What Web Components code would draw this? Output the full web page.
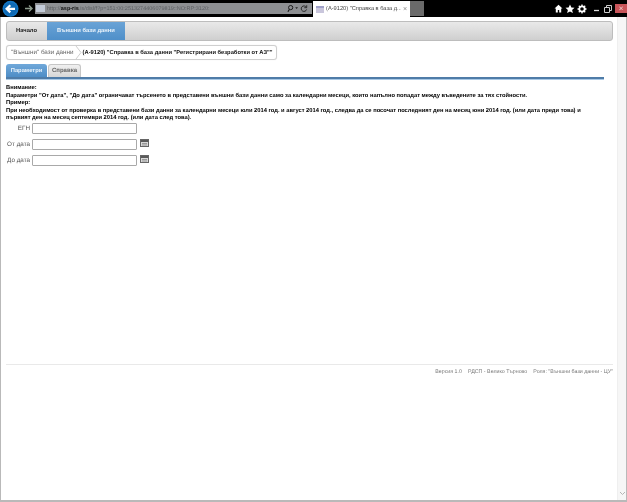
<!DOCTYPE html>
<html><head><meta charset="utf-8">
<style>
html,body{margin:0;height:502px;overflow:hidden;background:#fff;font-family:"Liberation Sans",Arial,sans-serif;text-rendering:geometricPrecision}
ie-window{height:502px;filter:blur(.3px)}
</style></head><body>
<ie-window>
  <ie-chrome></ie-chrome>
  <app-menu></app-menu>
  <crumb-bar></crumb-bar>
  <tab-strip></tab-strip>
  <notice-text></notice-text>
  <date-form></date-form>
  <app-footer></app-footer>
</ie-window>
<script>
function def(name,html){
  customElements.define(name,class extends HTMLElement{
    constructor(){super();this.attachShadow({mode:'open'}).innerHTML=html;}
  });
}
def('ie-window',`<style>
:host{display:flex;flex-direction:column;box-sizing:border-box;background:#b9b9b9;padding:0 1px 2px 1px}
.top{flex:none}
.body{flex:1;display:flex;min-height:0;background:#fff;}
.page{flex:1;display:flex;flex-direction:column;padding:4px 4px 0 5px;min-width:0;}
.sb{flex:none;width:9px;background:#f6f6f6;border-left:1px solid #efefef;box-sizing:border-box;display:flex;flex-direction:column;justify-content:flex-end;align-items:center;padding-bottom:4px}
</style>
<div class="top"><slot name="chrome"></slot></div>
<div class="body"><div class="page"><slot></slot></div>
<div class="sb"><svg width="7" height="5" viewBox="0 0 7 5"><path d="M1 1l2.500 2.500L6 1" fill="none" stroke="#b5b5b5" stroke-width="1"/></svg></div></div>`);
def('ie-chrome',`<style>
:host{display:flex;align-items:center;height:17px;background:#000;margin:0 -1px;position:relative;font-size:5.500px}
svg{display:block;flex:none}
.addr{width:277px;height:11px;margin-left:1px;background:#8d8f92;display:flex;align-items:center;color:#5c5f63;box-sizing:border-box;padding:0 3px 0 1px;gap:1px;white-space:nowrap;overflow:hidden}
.addr b{color:#111}
.addr .u{flex:1;overflow:hidden}
.pg{width:9px;height:7px;background:#c3cbd8;flex:none;margin-right:1px}
.tab{width:97px;height:16px;margin-left:1px;align-self:flex-end;background:#fff;display:flex;align-items:center;gap:2px;padding:0 3px 0 3px;box-sizing:border-box;color:#444;white-space:nowrap;font-size:5.700px}
.tab .t{flex:1;overflow:hidden}
.tab i{font-style:normal;color:#888;font-size:7px}
.fav{width:8px;height:7px;background:#c9c6dc;border-top:2px solid #9fa0c8;box-sizing:border-box;flex:none}
.new{width:14px;height:15px;background:#6a6a6a;align-self:flex-end;margin-bottom:1px}
.right{margin-left:auto;display:flex;align-items:center;height:17px}
.x{width:12px;height:9px;background:#c9555a;margin-left:3px;color:#f3d7d7;font-size:8px;line-height:9px;text-align:center}
</style>
<svg width="19" height="17" viewBox="0 0 19 17" style="margin-left:1px"><circle cx="9.500" cy="8.800" r="8" fill="#1577c5"/><circle cx="9.500" cy="8.800" r="6.600" fill="#0f6ab5"/><path d="M14 8.800H6M9.300 5.200L5.600 8.800l3.700 3.600" fill="none" stroke="#fff" stroke-width="2.200"/></svg>
<svg width="10" height="9" viewBox="0 0 10 9" style="margin-left:4px"><path d="M1 4.500h7M5 1.500l3 3-3 3" fill="none" stroke="#8c9a8c" stroke-width="1.400"/></svg>
<div class="addr"><span class="pg"></span><span class="u">http://<b>asp-ris</b>.is/disl/f?p=151:00:2513274406079819::NO:RP:3120:</span>
<svg width="22" height="9" viewBox="0 0 24 9"><circle cx="4" cy="3.500" r="2.300" fill="none" stroke="#111" stroke-width="1"/><path d="M2.500 5.500L1 8" stroke="#111" stroke-width="1.200"/><path d="M9 3l1.500 2L12 3z" fill="#222"/><path d="M21 3a3 3 0 1 0 .4 2.500M21.500 1v2.600h-2.600" fill="none" stroke="#222" stroke-width="1"/></svg></div>
<div class="tab"><span class="fav"></span><span class="t">(A-9120) "Справка в база д...</span><i>×</i></div>
<div class="new"></div>
<div class="right">
<svg width="9" height="9" viewBox="0 0 9 9" style="margin-right:2px"><path d="M4.500 .8L.5 4.500h1.300V8.500h2V6h1.400v2.500h2V4.500H8.500z" fill="#fff"/></svg>
<svg width="10" height="10" viewBox="0 0 10 10" style="margin-right:2px"><path d="M5 .5l1.400 3 3.100.3-2.400 2.100.8 3.200L5 7.400 2.100 9.100l.8-3.200L.5 3.800l3.100-.3z" fill="#fff"/></svg>
<svg width="10" height="10" viewBox="0 0 10 10" style="margin-right:6px"><circle cx="5" cy="5" r="2.700" fill="none" stroke="#fff" stroke-width="1.800"/><path d="M5 .5v2M5 7.500v2M.5 5h2M7.500 5h2M1.800 1.800l1.400 1.400M6.800 6.800l1.400 1.400M8.200 1.800L6.800 3.200M3.200 6.800L1.800 8.200" stroke="#fff" stroke-width="1.300"/></svg>
<svg width="7" height="10" viewBox="0 0 7 10" style="margin-right:4px"><path d="M1 6.500h5" stroke="#ddd" stroke-width="1.300"/></svg>
<svg width="8" height="8" viewBox="0 0 8 8"><path d="M.5 2.500h5v5h-5zM2.500 2.500v-2h5v5h-2" fill="none" stroke="#ccc"/></svg>
<div class="x">×</div></div>`);
def('app-menu',`<style>
:host{display:flex;flex:none;height:20px;box-sizing:border-box;border:1px solid #bdbdbd;border-radius:3px;background:linear-gradient(#e9e9e9,#cfcfcf);font-size:5.800px;overflow:hidden}
.i{display:flex;align-items:center;font-weight:bold}
.a{width:40px;padding-left:9px;box-sizing:border-box;color:#222}
.b{width:78px;justify-content:center;color:#eaf3fb;background:linear-gradient(#6aa3d6,#4f8fc9);}
</style><div class="i a">Начало</div><div class="i b">Външни бази данни</div>`);
def('crumb-bar',`<style>
:host{display:flex;flex:none;align-self:flex-start;align-items:center;height:15px;box-sizing:border-box;margin-top:4px;border:1px solid #cfcfcf;border-radius:3px;background:#fff;font-size:6.300px;white-space:nowrap;color:#333;box-shadow:0 0 1px #ddd}
.a{padding:0 1px 0 4px;color:#666}
svg{display:block;margin-right:1px}
.b{font-weight:bold;padding-right:3px;color:#111;font-size:5.750px}
</style><span class="a">"Външни" бази данни</span><svg width="7" height="13" viewBox="0 0 7 13"><path d="M1 0l5 6.500-5 6.500" fill="none" stroke="#cfcfcf"/></svg><span class="b">(A-9120) "Справка в база данни "Регистрирани безработки от АЗ""</span>`);
def('tab-strip',`<style>
:host{display:block;flex:none;margin-top:4px;margin-right:9px}
.r{display:flex;gap:1px;height:13px;font-size:5.800px;font-weight:bold}
.t{display:flex;align-items:center;justify-content:center;border-radius:3px 3px 0 0;box-sizing:border-box}
.a{width:41px;background:linear-gradient(#6fa8da,#4e8dc6);color:#e8f2fb}
.b{width:33px;background:linear-gradient(#f0f0f0,#d6d6d6);border:1px solid #c6c6c6;border-bottom:0;color:#666;font-size:6px}
.l{background:#4f7ca8;border-bottom:1px solid #a9c9e6;height:2px}
</style><div class="r"><div class="t a">Параметри</div><div class="t b">Справка</div></div><div class="l"></div>`);
def('notice-text',`<style>
:host{display:block;flex:none;margin-top:5px;margin-right:9px;font-size:5.770px;line-height:7.500px;font-weight:bold;color:#000}
</style><div>Внимание:</div><div>Параметри "От дата", "До дата" ограничават търсенето в представени външни бази данни само за календарни месеци, които напълно попадат между въведените за тях стойности.</div><div>Пример:</div><div>При необходимост от проверка в представени бази данни за календарни месеци юли 2014 год. и август 2014 год., следва да се посочат последният ден на месец юни 2014 год. (или дата преди това) и първият ден на месец септември 2014 год. (или дата след това).</div>`);
def('form-field',`<style>
:host{display:flex;align-items:center;height:11px;font-size:6.300px;color:#555}
label{width:24px;text-align:right;margin-right:2px;white-space:nowrap}
.in{width:105px;height:11px;box-sizing:border-box;border:1px solid #a9a9a9;background:#fff;border-radius:1px}
</style><label></label><div class="in"></div><slot></slot>`);
const cal=`<svg width="9" height="8" viewBox="0 0 9 8" style="display:block;margin-left:3px;margin-top:-3px"><rect x=".5" y=".5" width="8" height="7" fill="#d8d8d8" stroke="#666"/><rect x="1" y="1" width="7" height="2" fill="#5a5a5a"/><path d="M2 4.500h5M2 6h5" stroke="#999"/></svg>`;
def('date-form',`<style>
:host{display:flex;flex:none;flex-direction:column;gap:5px;margin-top:0}
</style>
<form-field data-l="ЕГН"></form-field>
<form-field data-l="От дата">${cal}</form-field>
<form-field data-l="До дата">${cal}</form-field>`);
def('app-footer',`<style>
:host{display:flex;flex:none;justify-content:flex-end;gap:6px;margin-top:auto;margin-bottom:123px;border-top:1px solid #e9e9e9;padding:3px 0 0 0;height:9px;font-size:5.300px;line-height:9px;color:#777;white-space:nowrap}
</style><span>Версия 1.0</span><span>РДСП - Велико Търново</span><span>Роля: "Външни бази данни - ЦУ"</span>`);
document.querySelector('ie-chrome').slot='chrome';
document.querySelectorAll('date-form').forEach(f=>f.shadowRoot.querySelectorAll('form-field').forEach(x=>{x.shadowRoot.querySelector('label').textContent=x.dataset.l;}));
</script>
</body></html>
